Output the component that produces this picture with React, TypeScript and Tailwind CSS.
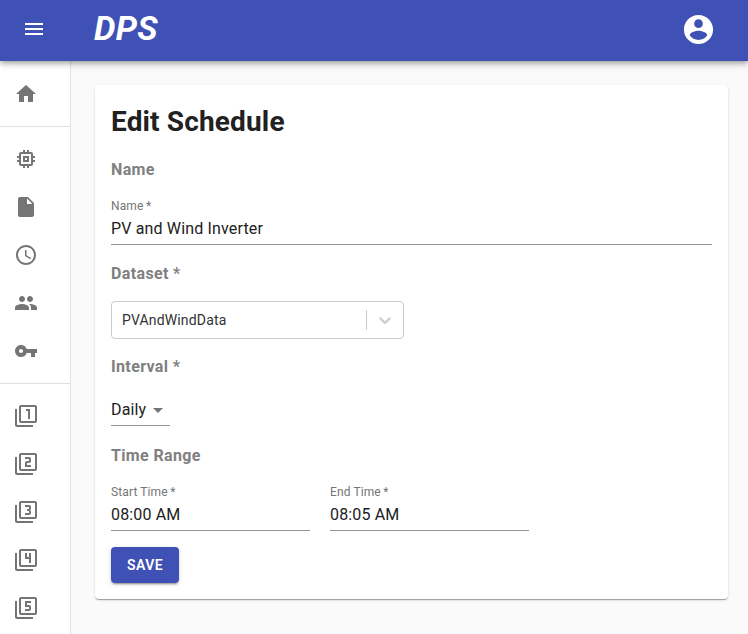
import type { ReactNode } from "react";
import {
  MdAccessTime,
  MdArrowDropDown,
  MdFilter1,
  MdFilter2,
  MdFilter3,
  MdFilter4,
  MdFilter5,
  MdHome,
  MdInsertDriveFile,
  MdMemory,
  MdMenu,
  MdPeople,
  MdVpnKey,
} from "react-icons/md";
import type { IconType } from "react-icons";

const groups: IconType[][] = [
  [MdHome],
  [MdMemory, MdInsertDriveFile, MdAccessTime, MdPeople, MdVpnKey],
  [MdFilter1, MdFilter2, MdFilter3, MdFilter4, MdFilter5],
];

function AccountIcon() {
  return (
    <svg width="35" height="35" viewBox="0 0 24 24" fill="currentColor">
      <path d="M12 2C6.48 2 2 6.48 2 12s4.48 10 10 10 10-4.48 10-10S17.52 2 12 2zm0 3c1.66 0 3 1.34 3 3s-1.34 3-3 3-3-1.34-3-3 1.34-3 3-3zm0 14.2c-2.5 0-4.71-1.28-6-3.22.03-1.99 4-3.08 6-3.08 1.99 0 5.97 1.09 6 3.08-1.29 1.94-3.5 3.22-6 3.22z" />
    </svg>
  );
}

function Sidebar() {
  return (
    <nav className="w-[71px] shrink-0 overflow-hidden border-r border-[#e0e0e0] bg-white pt-px">
      {groups.map((icons, g) => (
        <ul key={g} className="border-b border-[#e0e0e0] py-2">
          {icons.map((Icon, i) => (
            <li key={i} className="flex h-12 items-center pl-3.5 text-[#757575]">
              <Icon size={24} />
            </li>
          ))}
        </ul>
      ))}
    </nav>
  );
}

function Heading({ children }: { children: ReactNode }) {
  return <h2 className="text-base leading-6 font-bold tracking-[0.36px] text-[#808080]">{children}</h2>;
}

function Field({ label, value, className }: { label: string; value: string; className: string }) {
  return (
    <div className={className}>
      <div className="text-xs leading-3 tracking-[0.11px] text-[#757575]">{label}&thinsp;*</div>
      <div className="mt-1 flex h-[29px] items-center border-b border-[#949494] pb-[3px] text-base leading-[19px] tracking-[0.15px]">
        {value}
      </div>
    </div>
  );
}

export default function App() {
  return (
    <div className="flex h-[634px] w-[748px] flex-col overflow-hidden bg-[#fafafa] font-[Roboto,sans-serif] text-[#212121]">
      <header className="z-10 flex h-[61px] shrink-0 items-center bg-[#3f51b5] pr-8 pb-[3px] pl-[22px] text-white shadow-[0_2px_4px_-1px_rgba(0,0,0,0.2),0_4px_5px_0_rgba(0,0,0,0.14),0_1px_10px_0_rgba(0,0,0,0.12)]">
        <MdMenu size={24} />
        <div className="ml-12 grow pb-[3px] text-[34px] leading-[50px] font-bold tracking-[0.25px] italic">DPS</div>
        <AccountIcon />
      </header>
      <div className="flex min-h-0 grow">
        <Sidebar />
        <main className="grow pt-6 pr-5 pl-6">
          <section className="h-[514px] rounded bg-white px-4 pt-[21px] shadow-[0_2px_1px_-1px_rgba(0,0,0,0.2),0_1px_1px_0_rgba(0,0,0,0.14),0_1px_3px_0_rgba(0,0,0,0.12)]">
            <h1 className="text-[28px] leading-8 font-bold tracking-[0.15px]">Edit Schedule</h1>
            <div className="mt-5">
              <Heading>Name</Heading>
            </div>
            <Field label="Name" value="PV and Wind Inverter" className="mt-[18px]" />
            <div className="mt-[17px]">
              <Heading>Dataset *</Heading>
            </div>
            <div className="mt-[15px] flex h-[38px] w-[293px] items-center rounded border border-[#ccc] pl-2.5 text-sm tracking-[0.15px] text-[#333]">
              <span className="grow">PVAndWindData</span>
              <span className="h-5 w-px bg-[#ccc]" />
              <svg className="mx-2" width="20" height="20" viewBox="0 0 20 20" fill="#ccc">
                <path d="M4.516 7.548c0.436-0.446 1.043-0.481 1.576 0l3.908 3.747 3.908-3.747c0.533-0.481 1.141-0.446 1.574 0 0.436 0.445 0.408 1.197 0 1.615-0.406 0.418-4.695 4.502-4.695 4.502-0.217 0.223-0.502 0.335-0.787 0.335s-0.57-0.112-0.789-0.335c0 0-4.287-4.084-4.695-4.502s-0.436-1.17 0-1.615z" />
              </svg>
            </div>
            <div className="mt-4">
              <Heading>Interval *</Heading>
            </div>
            <div className="mt-[15px] flex h-8 w-[59px] items-center justify-between border-b border-[#949494] text-base tracking-[0.15px]">
              <span>Daily</span>
              <MdArrowDropDown size={24} className="shrink-0 text-[#757575]" />
            </div>
            <div className="mt-[18px]">
              <Heading>Time Range</Heading>
            </div>
            <div className="mt-[18px] flex gap-5">
              <Field label="Start Time" value="08:00 AM" className="w-[199px]" />
              <Field label="End Time" value="08:05 AM" className="w-[199px]" />
            </div>
            <button className="mt-4 flex h-9 w-[68px] items-center justify-center rounded bg-[#3f51b5] text-sm font-semibold tracking-[0.4px] text-white shadow-[0_3px_1px_-2px_rgba(0,0,0,0.2),0_2px_2px_0_rgba(0,0,0,0.14),0_1px_5px_0_rgba(0,0,0,0.12)]">
              SAVE
            </button>
          </section>
        </main>
      </div>
    </div>
  );
}
